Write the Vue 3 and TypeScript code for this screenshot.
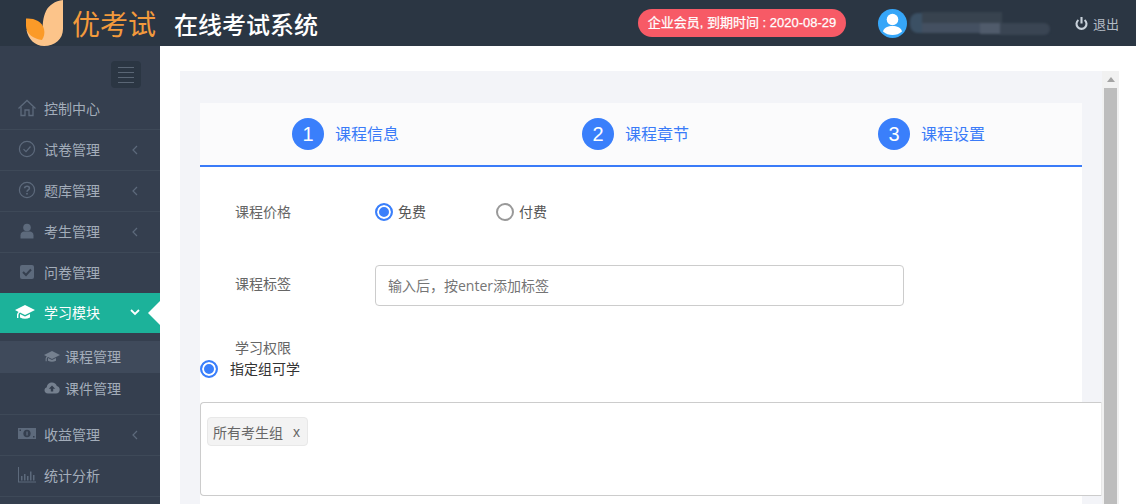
<script setup lang="ts">
interface MenuItem { label: string; icon: string; arrow?: boolean }
const before: MenuItem[] = [
  { label: '试卷管理', icon: 'check', arrow: true },
  { label: '题库管理', icon: 'help', arrow: true },
  { label: '考生管理', icon: 'user', arrow: true },
  { label: '问卷管理', icon: 'square' },
]
const after: MenuItem[] = [
  { label: '收益管理', icon: 'money', arrow: true },
  { label: '统计分析', icon: 'chart' },
]
const steps = ['课程信息', '课程章节', '课程设置']
const capPath = 'M10 2 L20 7 L10 12 L5 9.6 Q3.6 10.2 3.4 12 L3.4 15 L2 15 L2 11.6 Q2.4 9.8 3.6 9 L0 7 Z M5 11 L10 13.4 L15 11 L15 14.4 Q10 17 5 14.4 Z'
</script>

<template>
  <div class="page">
    <header class="top">
      <svg class="logo" width="37" height="46" viewBox="0 0 37 46">
        <path fill="#fcc48a" d="M37 0 L37 29 C37 39 29 46 18 46 C9 46 2 39 0.5 30 L17 34 C16 26 17 17 20 11 C23 5 29 1 37 0 Z" />
        <path fill="#fb9a28" d="M0 18.5 C8 18 16 21 18 29 C19 33 18 37 16 40 C8 39 0 34 0 26 Z" />
      </svg>
      <span class="brand">优考试</span>
      <span class="title">在线考试系统</span>
      <span class="member">企业会员, 到期时间 : 2020-08-29</span>
      <svg class="avatar" width="29" height="29" viewBox="0 0 29 29">
        <circle cx="14.5" cy="14.5" r="14.5" fill="#36a6f8" />
        <circle cx="14.5" cy="10.5" r="5.8" fill="#fff" />
        <path fill="#fff" d="M5 22.5 C6 18.5 10 17 14.5 17 C19 17 23 18.5 24 22.5 C21.5 25 18 26 14.5 26 C11 26 7.500 25 5 22.500 Z" />
      </svg>
      <div class="blurred">
        <i class="b1"></i><i class="b2"></i><i class="b3"></i><i class="b4"></i><i class="b5"></i>
      </div>
      <svg class="power" width="13" height="13" viewBox="0 0 13 13" fill="none" stroke="#c8d1da" stroke-width="2.100">
        <path d="M3.400 3 A5 5 0 1 0 9.600 3" />
        <path d="M6.500 0 V6.500" />
      </svg>
      <span class="logout">退出</span>
    </header>

    <div class="body">
      <aside class="side">
        <div class="toggle-row">
          <button class="toggle" type="button" aria-label="菜单"><i></i><i></i><i></i><i></i></button>
        </div>
        <div class="item first">
          <svg class="ico" width="18" height="18" viewBox="0 0 18 18" fill="none" stroke="#5d6a7c" stroke-width="1.300">
            <path d="M0.500 9.500 L9 1.500 L17.500 9.500" />
            <path d="M3 8 V16.500 H7 V11 H11 V16.500 H15 V8" />
          </svg>
          <span>控制中心</span>
        </div>
        <div v-for="m in before" :key="m.label" class="item">
          <svg v-if="m.icon === 'check'" class="ico" width="18" height="18" viewBox="0 0 18 18" fill="none" stroke="#5d6a7c" stroke-width="1.200">
            <circle cx="9" cy="9" r="7.600" />
            <path d="M5.500 9.200 L8 11.700 L12.500 6.500" />
          </svg>
          <svg v-else-if="m.icon === 'help'" class="ico" width="18" height="18" viewBox="0 0 18 18" fill="none" stroke="#5d6a7c" stroke-width="1.200">
            <circle cx="9" cy="9" r="7.600" />
            <path stroke-width="1.600" d="M6.600 7.200 C6.800 4.600 11.400 4.600 11.400 7.200 C11.400 9 9 8.800 9 10.800" />
            <path stroke-width="1.700" d="M9 12 V13.600" />
          </svg>
          <svg v-else-if="m.icon === 'user'" class="ico" width="18" height="18" viewBox="0 0 18 18" fill="#5d6a7c">
            <circle cx="9" cy="5.500" r="3.800" />
            <path d="M2.500 16 V13.200 C2.500 10.800 4.500 9.500 6 9.500 H12 C13.500 9.500 15.500 10.800 15.500 13.200 V16 Q15.500 16.500 15 16.500 H3 Q2.500 16.500 2.500 16 Z" />
          </svg>
          <svg v-else class="ico" width="18" height="18" viewBox="0 0 18 18">
            <rect x="2" y="2" width="14" height="14" rx="2" fill="#5d6a7c" />
            <path d="M5 9 L8 12 L13 6.500" fill="none" stroke="#353f4f" stroke-width="2" />
          </svg>
          <span>{{ m.label }}</span>
          <svg v-if="m.arrow" class="chev" width="6" height="10" viewBox="0 0 6 10" fill="none" stroke="#5d6a7c" stroke-width="1.200"><path d="M5 1 L1 5 L5 9" /></svg>
        </div>
        <div class="item active">
          <svg class="ico cap" width="20" height="18" viewBox="0 0 20 18" fill="#fff"><path :d="capPath" /></svg>
          <span>学习模块</span>
          <svg class="chev down" width="10" height="7" viewBox="0 0 10 7" fill="none" stroke="#fff" stroke-width="1.800"><path d="M1 1 L5 5 L9 1" /></svg>
          <i class="notch"></i>
        </div>
        <div class="sub">
          <div class="sub-item on">
            <svg width="16" height="15" viewBox="0 0 20 18" fill="#75808f"><path :d="capPath" /></svg>
            <span>课程管理</span>
          </div>
          <div class="sub-item">
            <svg width="16" height="14" viewBox="0 0 16 14"><path fill="#75808f" d="M4 12.500 C1.800 12.500 0.500 11 0.500 9.200 C0.500 7.700 1.500 6.500 2.800 6.200 C3 3.600 5.300 1.500 8 1.500 C10.300 1.500 12.200 3 12.800 5 C14.500 5.200 15.700 6.700 15.700 8.700 C15.700 10.800 14.200 12.500 12 12.500 Z" /><path fill="#353f4f" d="M8 4.500 L11.200 7.800 H9.200 V10.500 H6.800 V7.800 H4.800 Z" /></svg>
            <span>课件管理</span>
          </div>
        </div>
        <div v-for="m in after" :key="m.label" class="item">
          <svg v-if="m.icon === 'money'" class="ico" width="18" height="18" viewBox="0 0 18 18">
            <rect x="0" y="3" width="18" height="11" fill="#5d6a7c" />
            <ellipse cx="9" cy="8.500" rx="3.600" ry="3.800" fill="#353f4f" />
            <rect x="8.400" y="6.500" width="1.300" height="4" fill="#5d6a7c" />
            <rect x="1.500" y="4.500" width="1.500" height="1.500" fill="#353f4f" />
            <rect x="15" y="11" width="1.500" height="1.500" fill="#353f4f" />
          </svg>
          <svg v-else class="ico" width="18" height="18" viewBox="0 0 18 18" fill="#5d6a7c">
            <path d="M0 1 H1 V15.500 H18 V16.500 H0 Z" />
            <rect x="3" y="10" width="1.500" height="4.500" />
            <rect x="6" y="8" width="1.500" height="6.500" />
            <rect x="9" y="10" width="1.500" height="4.500" />
            <rect x="12" y="5.500" width="1.500" height="9" />
            <rect x="15" y="9" width="1.500" height="5.500" />
          </svg>
          <span>{{ m.label }}</span>
          <svg v-if="m.arrow" class="chev" width="6" height="10" viewBox="0 0 6 10" fill="none" stroke="#5d6a7c" stroke-width="1.200"><path d="M5 1 L1 5 L5 9" /></svg>
        </div>
      </aside>

      <main class="main">
        <div class="panel">
          <div class="scroll">
            <section class="card">
              <div class="steps">
                <div v-for="(s, i) in steps" :key="s" class="step">
                  <b>{{ i + 1 }}</b><span>{{ s }}</span>
                </div>
              </div>
              <div class="form">
                <div class="row price">
                  <label>课程价格</label>
                  <div class="radio-wrap on"><i></i><span>免费</span></div>
                  <div class="radio-wrap off"><i></i><span>付费</span></div>
                </div>
                <div class="row tags">
                  <label>课程标签</label>
                  <input type="text" placeholder="输入后，按enter添加标签" />
                </div>
                <label class="perm">学习权限</label>
              </div>
              <div class="radio-wrap on group"><i></i><span>指定组可学</span></div>
              <div class="tagbox">
                <span class="tag">所有考生组<em>x</em></span>
              </div>
            </section>
          </div>
          <div class="bar">
            <div class="up"><i></i></div>
            <div class="thumb"></div>
          </div>
        </div>
      </main>
    </div>
  </div>
</template>

<style>
html, body { margin: 0; background: #fff; overflow: hidden; }
</style>

<style scoped>
.page {
  width: 1136px;
  height: 504px;
  overflow: hidden;
  font-family: "Noto Sans CJK SC", "Liberation Sans", sans-serif;
  font-size: 14px;
}
.top {
  height: 46px;
  background: #2b3643;
  display: flex;
  align-items: center;
  padding-left: 26px;
  box-sizing: border-box;
}
.logo { flex: none; }
.brand { margin-left: 9px; font-size: 28px; line-height: 46px; color: #f39a3c; width: 84px; white-space: nowrap; }
.title { margin-left: 18px; font-size: 24px; font-weight: 500; color: #fff; width: 144px; white-space: nowrap; }
.member {
  margin-left: 320px;
  width: 208px;
  height: 28px;
  line-height: 28px;
  border-radius: 14px;
  background: #f75a66;
  color: #fff;
  font-size: 13px;
  text-align: center;
  white-space: nowrap;
  -webkit-text-stroke: 0.25px #fff;
  font-family: "Liberation Sans", "Noto Sans CJK SC", sans-serif;
}
.avatar { margin-left: 32px; flex: none; }
.blurred { position: relative; width: 140px; height: 23px; margin-left: 3px; overflow: visible; filter: blur(1.2px); }
.blurred i { position: absolute; display: block; }
.b1 { left: 0; top: 1px; width: 12px; height: 20px; background: #3b5064; border-radius: 8px 0 0 8px; }
.b2 { left: 12px; top: 0; width: 80px; height: 11px; background: #38434f; }
.b3 { left: 12px; top: 11px; width: 58px; height: 10px; background: #445061; }
.b4 { left: 70px; top: 11px; width: 20px; height: 11px; background: #505b6b; }
.b5 { left: 90px; top: 11px; width: 50px; height: 12px; background: #3a4553; border-radius: 0 8px 8px 0; }
.power { margin-left: 25px; flex: none; }
.logout { margin-left: 5px; font-size: 13px; color: #b4bcc6; white-space: nowrap; }

.body { display: flex; height: 458px; }
.side { width: 160px; flex: none; background: #353f4f; overflow: hidden; }
.toggle-row { height: 42px; display: flex; justify-content: flex-end; align-items: flex-end; padding-right: 19px; box-sizing: border-box; }
.toggle {
  width: 30px; height: 27px; padding: 0; border: 0; border-radius: 4px; background: #2b3643;
  display: flex; flex-direction: column; justify-content: center; align-items: center; gap: 4px;
}
.toggle i { display: block; width: 16px; height: 1px; background: #5a6675; }
.item {
  height: 41px;
  box-sizing: border-box;
  display: flex;
  align-items: center;
  padding: 0 0 2px 18px;
  border-bottom: 1px solid #3e4958;
  color: #a3adba;
  font-size: 14px;
  position: relative;
}
.item.first { height: 42px; }
.item:nth-child(6) { height: 40px; border-bottom: 0; }
.item span { margin-left: 8px; white-space: nowrap; }
.ico { flex: none; }
.chev { position: absolute; left: 132px; top: 15px; }
.item.active {
  height: 40px;
  background: #1cb29a;
  color: #fff;
  border-bottom: 0;
  padding-left: 15px;
}
.active span { margin-left: 9px; }
.chev.down { left: 130px; top: 16px; }
.notch {
  position: absolute;
  right: 0;
  top: 8px;
  width: 0;
  height: 0;
  border-top: 12px solid transparent;
  border-bottom: 12px solid transparent;
  border-right: 12px solid #fff;
}
.sub { padding: 8px 0 9px; border-bottom: 1px solid #3e4958; height: 82px; box-sizing: border-box; background: #353f4f; }
.sub-item { height: 32px; box-sizing: border-box; padding: 0 0 2px 44px; display: flex; align-items: center; color: #a3adba; font-size: 14px; }
.sub-item span { margin-left: 5px; white-space: nowrap; }
.sub-item.on { background: #3f4a5b; }

.main { flex: 1; min-width: 0; padding: 25px 17px 0 20px; box-sizing: border-box; overflow: hidden; }
.panel { height: 433px; background: #f3f4f8; display: flex; overflow: hidden; }
.scroll { flex: 1; min-width: 0; padding: 32px 0 0 20px; box-sizing: border-box; overflow: hidden; }
.card { width: 882px; height: 440px; background: #fff; }
.steps {
  height: 64px;
  box-sizing: border-box;
  background: #fbfbfc;
  border-bottom: 2px solid #3a7bf8;
  display: grid;
  grid-template-columns: 290px 296px 1fr;
  padding-left: 92px;
  align-items: center;
}
.step { display: flex; align-items: center; color: #3a7bf8; font-size: 16px; }
.step span { padding-bottom: 2px; }
.step b {
  width: 32px; height: 32px; border-radius: 50%; background: #3a7ffb; color: #fff;
  font-size: 20px; font-weight: 400; line-height: 32px; text-align: center; margin-right: 11px;
  font-family: "Liberation Sans", sans-serif;
}
.form { padding: 36px 0 0 35px; color: #666; box-sizing: border-box; }
.row { display: flex; align-items: center; }
.row label { width: 140px; flex: none; }
.price { height: 18px; }
.price label { padding-bottom: 2px; }
.radio-wrap { display: flex; align-items: center; color: #555; white-space: nowrap; }
.radio-wrap span { padding-bottom: 2px; }
.radio-wrap i { display: block; width: 18px; height: 18px; box-sizing: border-box; border-radius: 50%; margin-right: 5px; flex: none; }
.radio-wrap.on i { border: 2px solid #3a7ffb; background: #3a7ffb; box-shadow: inset 0 0 0 2px #fff; }
.radio-wrap.off i { border: 2px solid #999; background: #fff; }
.price .off { margin-left: 70px; }
.tags { margin-top: 44px; align-items: flex-start; }
.tags label { margin-top: 8px; }
.tags input {
  width: 529px; height: 41px; box-sizing: border-box; border: 1px solid #ccc; border-radius: 4px;
  padding: 0 12px; font: inherit; font-size: 14px; color: #333; outline: none; background: #fff;
  font-family: "Open Sans", "Noto Sans CJK SC", sans-serif;
}
.tags input::placeholder { color: #757575; opacity: 1; }
.perm { display: block; margin-top: 31px; line-height: 20px; }
.group { color: #333; height: 18px; margin-top: 3px; }
.group i { margin-right: 12px; }
.tagbox {
  margin-top: 24px;
  height: 94px;
  width: 902px;
  box-sizing: border-box;
  border: 1px solid #ccc;
  border-right-color: #e8e8e8;
  border-radius: 4px 0 0 4px;
  background: #fff;
  padding: 14px 6px;
}
.tag {
  display: inline-flex; align-items: center; height: 29px; width: 101px; box-sizing: border-box;
  background: #f3f3f3; border: 1px solid #e8e8e8; border-radius: 4px; padding-left: 5px; color: #666; font-size: 14px; white-space: nowrap;
}
.tag em { font-style: normal; margin-left: 10px; font-family: "Liberation Sans", sans-serif; }
.bar { width: 17px; flex: none; background: #f1f1f1; }
.up { height: 17px; display: flex; justify-content: center; align-items: center; }
.up i { display: block; width: 0; height: 0; border-left: 4px solid transparent; border-right: 4px solid transparent; border-bottom: 5px solid #a3a3a3; }
.thumb { width: 13px; height: 430px; margin-left: 2px; background: #bdbdbd; }
</style>
